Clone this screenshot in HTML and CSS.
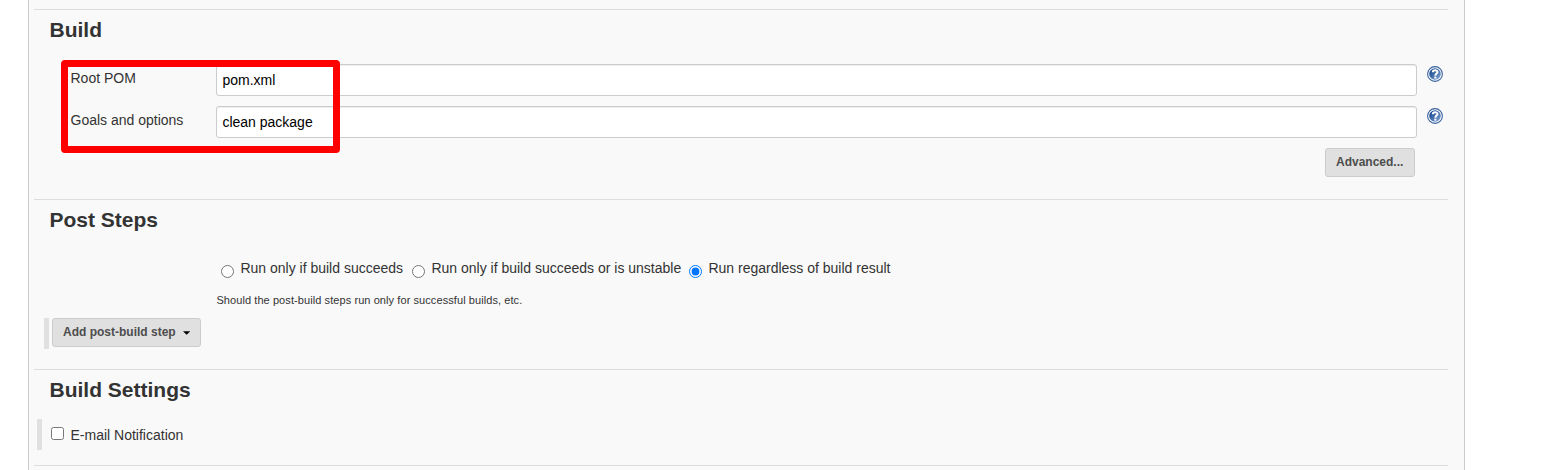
FILE: index.html
```html
<!DOCTYPE html>
<html lang="en">
<head>
<meta charset="utf-8">
<title>Job configuration</title>
<link rel="stylesheet" href="styles.css">
</head>
<body>
<svg class="defs" width="0" height="0" aria-hidden="true">
  <defs>
    <linearGradient id="ball" x1="0" y1="0" x2="1" y2="1">
      <stop offset="0.2" stop-color="#1f4f93"/>
      <stop offset="1" stop-color="#86a8d6"/>
    </linearGradient>
    <symbol id="help" viewBox="0 0 16 16">
      <circle cx="8" cy="8" r="7.4" fill="#fff" stroke="#38619f" stroke-width="1.1"/>
      <circle cx="8" cy="8" r="5.8" fill="url(#ball)"/>
      <path d="M5.8 6.2C5.8 3.6 10.5 3.6 10.5 6.1C10.5 7.6 8.4 7.7 8.4 9.7" fill="none" stroke="#fff" stroke-width="2"/>
      <rect x="7.3" y="10.6" width="2.1" height="2" fill="#fff"/>
    </symbol>
  </defs>
</svg>
<main class="panel">
  <section class="section build">
    <h2 class="title">Build</h2>
    <div class="field">
      <label class="label" for="pom">Root POM</label>
      <input class="input" id="pom" type="text" value="pom.xml">
      <svg class="help"><use href="#help"/></svg>
    </div>
    <div class="field">
      <label class="label" for="goals">Goals and options</label>
      <input class="input" id="goals" type="text" value="clean package">
      <svg class="help"><use href="#help"/></svg>
    </div>
    <div class="actions"><button class="button advanced">Advanced...</button></div>
    <div class="highlight"></div>
  </section>
  <section class="section post">
    <h2 class="title">Post Steps</h2>
    <div class="radios">
      <label class="option first"><input class="radio" type="radio" name="run"><span>Run only if build succeeds</span></label>
      <label class="option second"><input class="radio" type="radio" name="run"><span>Run only if build succeeds or is unstable</span></label>
      <label class="option"><input class="radio" type="radio" name="run" checked><span>Run regardless of build result</span></label>
    </div>
    <p class="hint">Should the post-build steps run only for successful builds, etc.</p>
    <div class="step">
      <button class="button add">Add post-build step<svg class="caret" viewBox="0 0 8 4"><path d="M0 0H8L4 4Z"/></svg></button>
    </div>
  </section>
  <section class="section settings">
    <h2 class="title">Build Settings</h2>
    <label class="mail"><input class="check" type="checkbox"><span>E-mail Notification</span></label>
  </section>
  <section class="section last"></section>
</main>
</body>
</html>
```
FILE: styles.css
```css
* { box-sizing: border-box; }

body {
  margin: 0;
  background: #fff;
  color: #333;
  font: 14px/20px "Liberation Sans", Arial, sans-serif;
  overflow: hidden;
}

.defs { position: absolute; }

.panel {
  width: 1437px;
  height: 470px;
  margin-left: 28px;
  padding: 9px 16px 0 5px;
  border: solid #ccc;
  border-width: 0 1px;
  background: #f9f9f9;
  overflow: hidden;
}

.section {
  position: relative;
  border-top: 1px solid #ddd;
}

.build { height: 190px; }
.post { height: 170px; }
.settings { height: 96px; }
.last { height: 5px; }

.title {
  margin: 0;
  padding: 8px 0 0 15.5px;
  height: 54px;
  font-size: 21px;
  line-height: 24px;
  font-weight: bold;
}

.field {
  display: flex;
  align-items: flex-start;
  height: 42px;
  padding-left: 36px;
}

.label { width: 146px; padding: 4px 0 0 0.5px; }

.input {
  width: 1201px;
  height: 32px;
  padding: 0 5.4px;
  border: 1px solid #ccc;
  border-radius: 3px;
  background: #fff;
  box-shadow: inset 0 1px 1px rgba(0, 0, 0, 0.075);
  color: #000;
  font: inherit;
}

.help { width: 16px; height: 16px; margin: 2px 0 0 10px; }

.actions {
  display: flex;
  justify-content: flex-end;
  padding-right: 33px;
}

.button {
  display: flex;
  align-items: center;
  height: 29px;
  padding: 0 10px 2px;
  border: 1px solid #ccc;
  border-radius: 3px;
  background: #e0e0e0;
  color: #4d4d4d;
  font: bold 12px/16px "Liberation Sans", Arial, sans-serif;
  white-space: nowrap;
}

.advanced { width: 90px; }
.add { width: 149px; }
.caret { width: 8px; height: 4px; margin: 3px 0 0 7px; }

.highlight {
  position: absolute;
  left: 27px;
  top: 50px;
  width: 279px;
  height: 93px;
  border: 7px solid #f00;
  border-radius: 4px;
}

.radios {
  display: flex;
  height: 36px;
  padding-left: 187px;
  padding-top: 4px;
}

.option { display: flex; white-space: nowrap; }
.first { width: 191px; }
.second { width: 277px; }

.radio { width: 13px; height: 13px; margin: 7px 6.4px 0 0; }

.hint {
  margin: 0;
  padding-left: 182.4px;
  height: 28px;
  font-size: 11px;
  line-height: 20px;
  letter-spacing: 0.08px;
}

.step {
  height: 31px;
  margin-left: 10px;
  padding-left: 3px;
  border-left: 5px solid #e0e0e0;
}

.settings .title { height: 49px; }

.mail {
  display: flex;
  height: 31px;
  margin-left: 3px;
  padding: 6px 0 0 9px;
  border-left: 5px solid #e0e0e0;
}

.check { width: 13px; height: 13px; margin: 2px 6.5px 0 0; }
```
